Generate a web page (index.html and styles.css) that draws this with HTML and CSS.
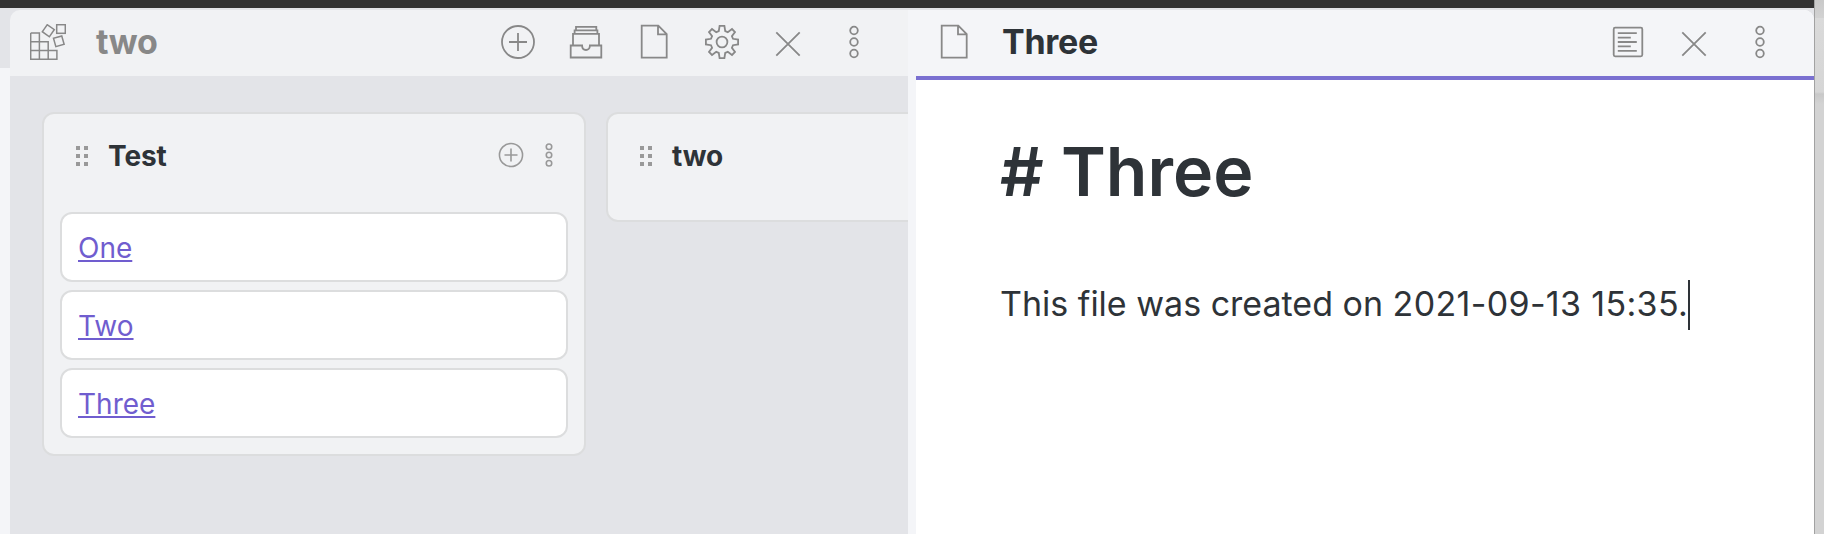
FILE: index.html
```html
<!DOCTYPE html>
<html lang="en">
<head>
<meta charset="utf-8">
<title>two</title>
<link rel="stylesheet" href="styles.css">
</head>
<body>
<svg class="defs" width="0" height="0">
  <symbol id="plus" viewBox="0 0 36 36"><circle cx="18" cy="18" r="16"/><path d="M18 9v18M9 18h18"/></symbol>
  <symbol id="file" viewBox="0 0 36 36"><path d="M5.7 1.7h16.6l8.4 8.4v23.6h-25zM22 1.7v8.6h8.7"/></symbol>
  <symbol id="close" viewBox="0 0 32 36"><path d="M4.3 8.3l23.4 23.4M27.7 8.3L4.3 31.7"/></symbol>
  <symbol id="dots" viewBox="0 0 36 36"><circle cx="18" cy="6.5" r="3.8"/><circle cx="18" cy="18" r="3.8"/><circle cx="18" cy="29.5" r="3.8"/></symbol>
</svg>
<div class="topbar"></div>
<div class="workspace">
  <div class="edge-left"></div>
  <section class="pane board-pane">
    <header class="pane-header">
      <svg class="icon fine" viewBox="0 0 36 36"><path d="M.7 9h8.7v26M.7 9v26.3h26.2v-8.7H.7M.7 17.8h17.5v17.5M9.4 17.8v17.5"/><rect x="26.7" y=".7" width="8.6" height="8.6"/><rect x="14" y="2.4" width="8.6" height="8.6" transform="rotate(35 18.3 6.7)"/><rect x="24.5" y="13" width="8.6" height="8.6" transform="rotate(-16 28.8 17.3)"/></svg>
      <h2 class="pane-title muted">two</h2>
      <div class="actions">
        <svg class="icon"><use href="#plus"/></svg>
        <svg class="icon" viewBox="0 0 36 36"><path d="M2.7 21.5h11.4c0 6 7.8 6 7.8 0h11.4v12H2.7zM5 21.5V9.8h26v11.7M6.6 9.8V6.4h22.8v3.4M8 6.4V2.8h20.3v3.6"/></svg>
        <svg class="icon"><use href="#file"/></svg>
        <svg class="icon" viewBox="0 0 36 36"><circle cx="18" cy="18" r="5.4"/><path d="M15.6 1.9h4.8l.8 5.1 2.6 1.1 4.2-3.1 3 3-3.1 4.2 1.1 2.6 5.1.8v4.8l-5.1.8-1.1 2.6 3.1 4.2-3 3-4.2-3.1-2.6 1.1-.8 5.1h-4.8l-.8-5.1-2.6-1.1L8 31l-3-3 3.1-4.2L7 21.2l-5.1-.8v-4.8l5.1-.8 1.1-2.6L5 8l3-3 4.2 3.1L14.8 7z"/></svg>
        <svg class="icon narrow"><use href="#close"/></svg>
        <svg class="icon"><use href="#dots"/></svg>
      </div>
    </header>
    <div class="board">
      <div class="lane">
        <div class="lane-header">
          <svg class="grip" viewBox="0 0 12 20"><path d="M0 0h4v4H0zM8 0h4v4H8zM0 8h4v4H0zM8 8h4v4H8zM0 16h4v4H0zM8 16h4v4H8z"/></svg>
          <h3 class="lane-title">Test</h3>
          <div class="lane-actions">
            <svg class="small-icon"><use href="#plus"/></svg>
            <svg class="small-icon"><use href="#dots"/></svg>
          </div>
        </div>
        <div class="cards">
          <div class="card"><a class="link">One</a></div>
          <div class="card"><a class="link">Two</a></div>
          <div class="card"><a class="link">Three</a></div>
        </div>
      </div>
      <div class="lane">
        <div class="lane-header">
          <svg class="grip" viewBox="0 0 12 20"><path d="M0 0h4v4H0zM8 0h4v4H8zM0 8h4v4H0zM8 8h4v4H8zM0 16h4v4H0zM8 16h4v4H8z"/></svg>
          <h3 class="lane-title">two</h3>
        </div>
      </div>
    </div>
  </section>
  <div class="divider"></div>
  <section class="pane note-pane">
    <header class="pane-header">
      <svg class="icon"><use href="#file"/></svg>
      <h2 class="pane-title">Three</h2>
      <div class="actions">
        <svg class="icon" viewBox="0 0 36 36"><rect x="3.7" y="3.7" width="28.6" height="28.6" rx="1.5"/><path d="M7.8 9.2h19M7.8 13.7h13M7.8 18h19M7.8 22.3h13M7.8 26.8h19"/></svg>
        <svg class="icon narrow"><use href="#close"/></svg>
        <svg class="icon"><use href="#dots"/></svg>
      </div>
    </header>
    <div class="editor">
      <h1 class="heading"># Three</h1>
      <p class="line"><span class="text">This file was created on <span class="date">2021-09-13 15:35.</span></span><span class="caret"></span></p>
    </div>
  </section>
  <div class="edge-right"></div>
</div>
</body>
</html>
```
FILE: styles.css
```css
* { box-sizing: border-box; }
body { margin: 0; height: 534px; overflow: hidden; display: flex; flex-direction: column; background: #e3e4e8; color: #2e3338; font-family: Inter, sans-serif; }
h1, h2, h3, p { margin: 0; }
.defs { position: absolute; }
.topbar { height: 8px; flex: none; width: 1814px; background: #333; }
.workspace { flex: 1; display: flex; min-height: 0; }
.edge-left { width: 10px; flex: none; background: linear-gradient(#e3e4e8 60px, #f4f5f8 60px); }
.divider { width: 8px; flex: none; margin-top: 2px; background: #f4f5f8; }
.edge-right { width: 10px; flex: none; margin-top: -8px; border-left: 1px solid #a2a2a2; background: linear-gradient(#c9c9c9, #d2d2d2 18px, #dadada 18px, #d6d6d6 92px, #c8c8c8 94px, #d3d3d3 104px); }
.pane { width: 898px; flex: none; margin-top: 2px; overflow: hidden; display: flex; flex-direction: column; }
.board-pane { border-top-left-radius: 10px; }
.note-pane { border-top-right-radius: 10px; background: #fff; }
.pane-header { height: 66px; flex: none; padding: 0 36px 2px 20px; display: flex; align-items: center; gap: 30px; background: #f1f2f4; }
.note-pane .pane-header { height: 70px; padding-bottom: 2px; background: #f4f5f8; border-bottom: 4px solid #7a70d1; }
.pane-title { font-size: 34px; line-height: 40px; font-weight: 700; letter-spacing: -0.3px; }
.muted { color: #888; }
.actions { margin-left: auto; display: flex; gap: 32px; }
.icon { width: 36px; height: 36px; flex: none; fill: none; stroke: #888; stroke-width: 1.8; }
.fine { stroke-width: 1.5; }
.narrow { width: 32px; }
.board { flex: 1; padding: 36px 0 0 32px; display: flex; align-items: flex-start; gap: 20px; background: #e3e4e8; }
.lane { width: 544px; flex: none; border: 2px solid #dcddde; border-radius: 12px; background: #f1f2f4; }
.lane-header { height: 84px; padding: 0 22px 0 32px; display: flex; align-items: center; gap: 20px; }
.lane:last-child .lane-header { height: 106px; padding-bottom: 22px; }
.grip { width: 12px; height: 20px; fill: #999; }
.lane-title { font-size: 28px; line-height: 36px; font-weight: 650; letter-spacing: -0.1px; }
.lane-actions { margin: -2px 0 0 auto; display: flex; gap: 12px; }
.small-icon { width: 26px; height: 26px; fill: none; stroke: #999; stroke-width: 2.2; }
.cards { padding: 14px 16px 16px; display: flex; flex-direction: column; gap: 8px; }
.card { height: 70px; padding: 2px 16px 0; border: 2px solid #dcddde; border-radius: 12px; background: #fff; display: flex; align-items: center; }
.link { font-size: 28px; line-height: 36px; color: #705dcf; text-decoration: underline; text-decoration-thickness: 2px; text-underline-offset: 2px; }
.editor { padding: 45px 0 0 84px; }
.heading { font-size: 68px; line-height: 92px; font-weight: 600; }
.line { margin-top: 63px; height: 50px; display: flex; align-items: center; font-size: 34px; line-height: 50px; }
.text { white-space: nowrap; margin-top: -2px; }
.date { letter-spacing: 0.34px; }
.caret { width: 2px; height: 50px; background: #2e3338; }
```
